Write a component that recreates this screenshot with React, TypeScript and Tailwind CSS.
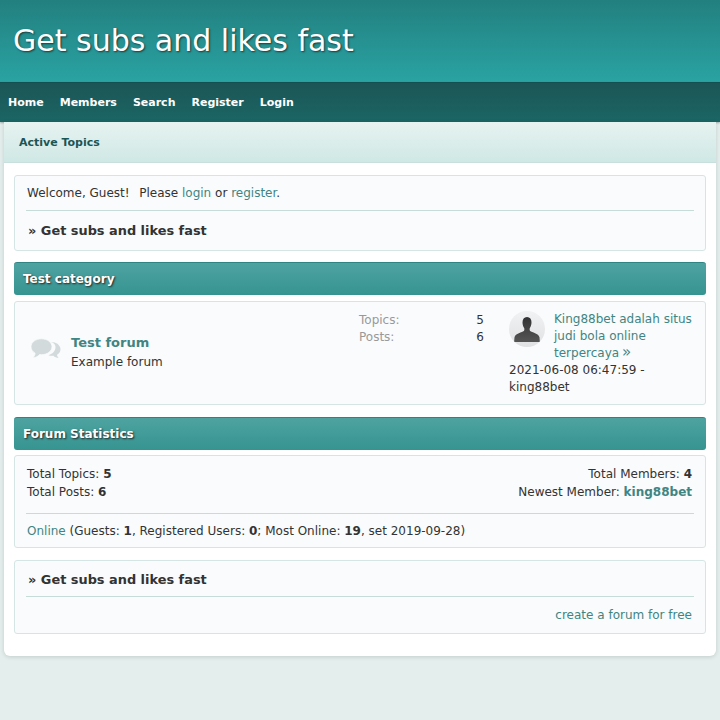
import React from 'react';

const link = 'text-[#3f8583]';

function Box({ className, children }: { className?: string; children: React.ReactNode }) {
  return (
    <div className={`mx-[10px] rounded-[3px] border border-[#d5e5e3] bg-[#f9fbfc] ${className ?? ''}`}>
      {children}
    </div>
  );
}

function CatHead({ title, className }: { title: string; className?: string }) {
  return (
    <div className={`mx-[10px] flex h-[33px] items-center rounded-[3px] border-t border-[#2f8583] bg-gradient-to-b from-[#4ea3a1] to-[#359491] px-[9px] text-[12px] font-bold text-white [text-shadow:1px_1px_2px_#222] ${className ?? ''}`}>
      {title}
    </div>
  );
}

function BoardTitle() {
  return <div className="text-[12.9px] font-bold leading-[18px] text-[#333]">» Get subs and likes fast</div>;
}

function ChatIcon() {
  return (
    <svg width="32" height="24" viewBox="0 0 32 24" className="-mt-[6px] shrink-0">
      <path d="M21 4c5.300 0 9.500 3.200 9.500 7.200 0 2.400-1.400 4.300-3.500 5.500.1 1.300.8 2.400 1.600 3.300-2-.2-3.900-1-5.200-2.300-1.800.2-3.400 0-4.900-.5 4.600-1.600 7-4.600 7-8 0-2-.9-3.900-4.500-5.200z" fill="#d2dadb" />
      <path d="M11.500 .8C5.600 .8 1 4.300 1 8.800c0 2.700 1.600 5 4.100 6.400 0 1.600-1 3.300-2.200 4.600 2.800-.2 5-1.200 6.700-3.200.6.100 1.300.1 1.900.1 5.900 0 10.500-3.500 10.500-7.900S17.400 .8 11.500 .8z" fill="#d2dadb" stroke="#f9fbfc" strokeWidth="0.8" />
    </svg>
  );
}

function Avatar() {
  return (
    <div className="h-9 w-9 shrink-0 overflow-hidden rounded-full bg-gradient-to-b from-[#f1f2f3] to-[#dfe1e3]">
      <svg viewBox="0 0 36 36" width="36" height="36">
        <defs>
          <linearGradient id="person" x1="0" y1="0" x2="0" y2="1">
            <stop offset="0" stopColor="#333" />
            <stop offset="1" stopColor="#555" />
          </linearGradient>
        </defs>
        <path d="M18 6c-3 0-4.500 2.200-4.500 5.300 0 2.400.7 4.500 1.700 5.800.3 1.200.2 2.300-.4 3-1.500 1.300-8.500 2.500-9.300 6.200-.1 1.200-.3 3-.3 4.700h25.600c0-1.700-.2-3.500-.3-4.700-.8-3.700-7.800-4.900-9.300-6.200-.6-.7-.7-1.800-.4-3 1-1.300 1.700-3.400 1.700-5.800C22.500 8.200 21 6 18 6z" fill="url(#person)" />
      </svg>
    </div>
  );
}

export default function App() {
  return (
    <div className="min-h-[720px] bg-[#e4efed] font-['DejaVu_Sans',sans-serif] text-[12px] text-[#333]">
      <div className="flex h-[82px] items-center bg-gradient-to-b from-[#22807f] to-[#2aa3a3] pb-[2px] pl-[13px] text-[30px] text-white [text-shadow:1px_1px_2px_#143c3c]">
        Get subs and likes fast
      </div>
      <div className="flex h-[40px] items-center gap-[16px] border-t border-[#164f4f] bg-gradient-to-b from-[#1c5555] to-[#1a6665] pl-2 pt-px text-[11px] font-bold text-white shadow-[0_1px_2px_rgba(0,0,0,0.3)]">
        <span>Home</span>
        <span>Members</span>
        <span>Search</span>
        <span>Register</span>
        <span>Login</span>
      </div>
      <div className="mx-1 h-[534px] rounded-b-[6px] bg-white shadow-[0_1px_4px_rgba(0,0,0,0.15)]">
        <div className="flex h-[41px] items-center border-b border-[#c8dfdd] bg-gradient-to-b from-[#e7f3f1] to-[#cfe8e5] pl-[15px] pt-[3px] text-[11px] font-bold text-[#1c5555]">
          Active Topics
        </div>

        <Box className="mt-3 h-[76px] px-[11px] pt-2">
          <div className="h-[26px] pl-px leading-[18px]">
            Welcome, Guest!&nbsp; <span className="ml-[2px]">Please</span> <span className={link}>login</span> or <span className={link}>register</span>.
          </div>
          <div className="border-t border-[#c5dcd9] pl-[2px] pt-[11px]">
            <BoardTitle />
          </div>
        </Box>

        <CatHead title="Test category" className="mt-[11px]" />

        <Box className="mt-[6px] flex h-[104px]">
          <div className="flex w-[344px] items-center pl-[15px]">
            <ChatIcon />
            <div className="ml-[9px] -mt-[3px]">
              <div className={`text-[13px] font-bold leading-[20px] ${link}`}>Test forum</div>
              <div className="leading-[18px]">Example forum</div>
            </div>
          </div>
          <div className="w-[150px] pt-[10px] leading-[17px]">
            <div className="flex w-[125px] justify-between">
              <span className="text-[#999]">Topics:</span>
              <span>5</span>
            </div>
            <div className="flex w-[125px] justify-between">
              <span className="text-[#999]">Posts:</span>
              <span>6</span>
            </div>
          </div>
          <div className="w-[190px] pt-[9px] leading-[17px]">
            <div className="flex gap-[9px]">
              <Avatar />
              <div className={link}>
                King88bet adalah situs judi bola online terpercaya
                <span className="ml-[3px] inline-block text-[15px] leading-none">»</span>
              </div>
            </div>
            <div>2021-06-08 06:47:59 - king88bet</div>
          </div>
        </Box>

        <CatHead title="Forum Statistics" className="mt-[12px]" />

        <Box className="mt-[5px] h-[93px] px-[11px] pt-[9px]">
          <div className="flex h-[48px] justify-between pl-px pr-[2px] leading-[18px]">
            <div>
              <div>Total Topics: <b>5</b></div>
              <div>Total Posts: <b>6</b></div>
            </div>
            <div className="text-right">
              <div>Total Members: <b>4</b></div>
              <div>Newest Member: <b className={link}>king88bet</b></div>
            </div>
          </div>
          <div className="border-t border-[#c5dcd9] pt-[8px] pl-px leading-[18px]">
            <span className={link}>Online</span> (Guests: <b>1</b>, Registered Users: <b>0</b>; Most Online: <b>19</b>, set 2019-09-28)
          </div>
        </Box>

        <Box className="mt-[12px] h-[74px] px-[11px] pt-[10px]">
          <div className="h-[25px] pl-[2px]">
            <BoardTitle />
          </div>
          <div className={`border-t border-[#c5dcd9] pt-[9px] pr-[2px] text-right leading-[18px] ${link}`}>create a forum for free</div>
        </Box>
      </div>
    </div>
  );
}
